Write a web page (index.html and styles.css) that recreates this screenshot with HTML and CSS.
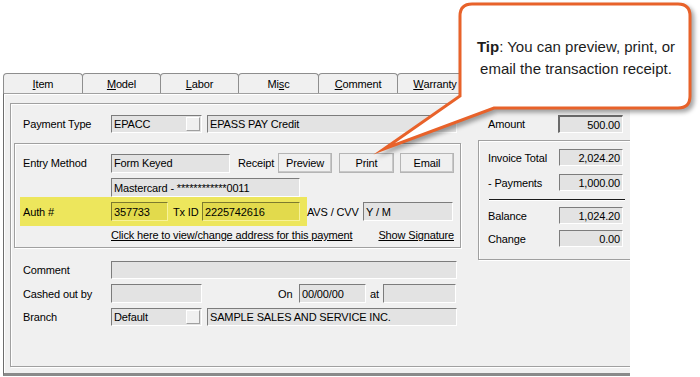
FILE: index.html
```html
<!DOCTYPE html>
<html>
<head>
<meta charset="utf-8">
<link rel="stylesheet" href="styles.css">
</head>
<body>
<div class="stage">
  <div class="window">
    <div class="tabs">
      <div class="tab t-item"><u>I</u>tem</div>
      <div class="tab t-model"><u>M</u>odel</div>
      <div class="tab t-labor"><u>L</u>abor</div>
      <div class="tab t-misc">Mi<u>s</u>c</div>
      <div class="tab t-comment"><u>C</u>omment</div>
      <div class="tab t-warranty"><u>W</u>arranty</div>
    </div>
    <div class="panel">
      <div class="group outer">
        <div class="col-left">
          <div class="row row-pay">
            <span class="lbl lbl-out">Payment Type</span>
            <div class="field combo"><span>EPACC</span><i class="drop"></i></div>
            <div class="field wide">EPASS PAY Credit</div>
          </div>

          <div class="group entry">
            <div class="row row-entry">
              <span class="lbl lbl-in">Entry Method</span>
              <div class="field f-keyed">Form Keyed</div>
              <span class="receipt">Receipt</span>
              <div class="btn b-preview">Preview</div>
              <div class="btn b-print">Print</div>
              <div class="btn b-email">Email</div>
            </div>
            <div class="row row-card">
              <div class="field f-card">Mastercard - ************0011</div>
            </div>
            <div class="row row-auth">
              <div class="hl">
                <span class="lbl lbl-auth">Auth #</span>
                <div class="field yf f-auth">357733</div>
                <span class="txid">Tx ID</span>
                <div class="field yf f-tx">2225742616</div>
              </div>
              <span class="avs">AVS / CVV</span>
              <div class="field f-avs">Y / M</div>
            </div>
            <div class="row row-link">
              <span class="link">Click here to view/change address for this payment</span>
              <span class="link sig">Show Signature</span>
            </div>
          </div>

          <div class="row row-comment">
            <span class="lbl lbl-out">Comment</span>
            <div class="field f-comment"></div>
          </div>
          <div class="row row-cashed">
            <span class="lbl lbl-out">Cashed out by</span>
            <div class="field f-cashed"></div>
            <span class="on">On</span>
            <div class="field f-date">00/00/00</div>
            <span class="at">at</span>
            <div class="field f-time"></div>
          </div>
          <div class="row row-branch">
            <span class="lbl lbl-out">Branch</span>
            <div class="field combo"><span>Default</span><i class="drop"></i></div>
            <div class="field wide">SAMPLE SALES AND SERVICE INC.</div>
          </div>
        </div>

        <div class="col-right">
          <div class="row row-amount">
            <span class="lbl lbl-amt">Amount</span>
            <div class="field num deep">500.00</div>
          </div>
          <div class="group totals">
            <div class="row trow">
              <span class="lbl lbl-tot">Invoice Total</span>
              <div class="field num">2,024.20</div>
            </div>
            <div class="row trow t2">
              <span class="lbl lbl-tot">- Payments</span>
              <div class="field num">1,000.00</div>
            </div>
            <div class="rule"></div>
            <div class="row trow t3">
              <span class="lbl lbl-tot">Balance</span>
              <div class="field num">1,024.20</div>
            </div>
            <div class="row trow t4">
              <span class="lbl lbl-tot">Change</span>
              <div class="field num">0.00</div>
            </div>
          </div>
        </div>
      </div>
    </div>
  </div>

  <svg class="callout" width="700" height="377" viewBox="0 0 700 377">
    <path d="M472 4 H678 Q690 4 690 16 V96 Q690 108 678 108 H494 L384 149 L460 96 V16 Q460 4 472 4 Z" fill="#ffffff" stroke="#e8622a" stroke-width="3" stroke-linejoin="miter" stroke-miterlimit="12"/>
  </svg>
  <div class="callout-text"><b>Tip</b>: You can preview, print, or<br>email the transaction receipt.</div>
</div>
</body>
</html>
```

FILE: styles.css
```css
* { box-sizing: border-box; }

body {
  margin: 0;
  background: #ffffff;
  font: 11px "Liberation Sans", Arial, sans-serif;
  letter-spacing: -0.15px;
  color: #000;
}

.stage {
  position: relative;
  width: 700px;
  height: 377px;
  overflow: hidden;
  padding: 73px 0 0 3px;
}

.window {
  width: 627px;
}

/* tabs */
.tabs {
  display: flex;
  height: 20px;
}
.tab {
  height: 20px;
  border: 1px solid #8e8e8e;
  border-bottom: none;
  border-radius: 4px 4px 0 0;
  background: #f0f0f0;
  display: flex;
  align-items: center;
  justify-content: center;
  margin-right: -1px;
  padding-top: 1px;
}
.t-item { width: 80px; }
.t-model { width: 79px; }
.t-labor { width: 79px; }
.t-misc { width: 81px; }
.t-comment { width: 80px; }
.t-warranty { width: 76px; }

/* panel */
.panel {
  height: 283px;
  background: #f0f0f0;
  border-top: 1px solid #a0a0a0;
  border-left: 1px solid #6d6d6d;
  border-bottom: 3px solid #8a8a8a;
  box-shadow: inset 1px 1px 0 #ffffff;
  overflow: hidden;
  padding: 9px 0 0 6px;
}

.group {
  border: 1px solid #a0a0a0;
  box-shadow: inset 1px 1px 0 #ffffff, 1px 1px 0 #ffffff;
}

.outer {
  display: flex;
  width: 700px;
  height: 264px;
}

.col-left {
  width: 457px;
  flex: none;
  display: flex;
  flex-direction: column;
}
.col-right {
  flex: none;
  width: 230px;
  display: flex;
  flex-direction: column;
}

.row {
  display: flex;
  align-items: center;
  flex: none;
}

.lbl { flex: none; white-space: nowrap; }
.lbl-out { width: 100px; padding-left: 12px; }
.lbl-in { width: 96px; padding-left: 8px; }

/* fields */
.field {
  flex: none;
  height: 18px;
  background: #e3e3e3;
  border: 1px solid;
  border-color: #7c7c7c #ffffff #ffffff #7c7c7c;
  padding: 0 2px;
  display: flex;
  align-items: center;
  white-space: nowrap;
  overflow: hidden;
}
.field.num { justify-content: flex-end; padding-right: 2px; }
.field.deep { border-width: 2px 1px 1px 2px; border-color: #6a6a6a #ffffff #ffffff #6a6a6a; }

.combo {
  width: 91px;
  justify-content: space-between;
  padding-right: 1px;
}
.drop {
  width: 14px;
  height: 14px;
  background: #f0f0f0;
  border: 1px solid;
  border-color: #ffffff #a0a0a0 #a0a0a0 #ffffff;
}
.wide { width: 250px; margin-left: 5px; }

.row-pay { margin-top: 11px; height: 18px; }

/* entry group */
.entry {
  margin: 10px 0 0 3px;
  width: 447px;
  height: 105px;
  padding-top: 9px;
  flex: none;
}
.row-entry { height: 20px; }
.f-keyed { width: 119px; height: 19px; }
.receipt { width: 40px; margin-left: 8px; }
.btn {
  flex: none;
  height: 20px;
  background: #f0f0f0;
  border: 1px solid;
  border-color: #ffffff #8a8a8a #8a8a8a #ffffff;
  box-shadow: inset -1px -1px 0 #c8c8c8;
  outline: 1px solid #b5b5b5;
  outline-offset: -1px;
  display: flex;
  align-items: center;
  justify-content: center;
}
.b-preview { width: 54px; }
.b-print { width: 55px; margin-left: 7px; }
.b-email { width: 54px; margin-left: 6px; }

.row-card { margin-top: 5px; padding-left: 96px; }
.f-card { width: 189px; height: 19px; }

.row-auth { height: 29px; }
.hl {
  display: flex;
  align-items: center;
  background: #ede65c;
  width: 287px;
  height: 29px;
  margin-left: 5px;
  padding-left: 3px;
}
.lbl-auth { width: 88px; }
.yf {
  height: 19px;
  background: #e2da4c;
  border-color: #7d7a2e #f7f29a #f7f29a #7d7a2e;
}
.f-auth { width: 57px; }
.txid { width: 29px; margin-left: 5px; }
.f-tx { width: 98px; }
.avs { width: 56px; }
.f-avs { width: 90px; height: 19px; }

.row-link { margin-top: 1px; height: 16px; padding-left: 96px; padding-right: 6px; }
.link { text-decoration: underline; white-space: nowrap; }
.sig { margin-left: auto; }

/* bottom rows */
.row-comment { margin-top: 13px; height: 18px; }
.f-comment { width: 346px; height: 18px; }
.row-cashed { margin-top: 5px; height: 19px; }
.f-cashed { width: 91px; height: 19px; }
.on { width: 21px; margin-left: 76px; }
.f-date { width: 67px; height: 19px; }
.at { width: 13px; margin-left: 4px; }
.f-time { width: 73px; height: 19px; }
.row-branch { margin-top: 5px; height: 18px; }

/* right column */
.row-amount { margin-top: 11px; height: 18px; }
.lbl-amt { width: 90px; padding-left: 20px; }
.row-amount .field { width: 65px; }

.totals {
  margin: 7px 0 0 10px;
  width: 220px;
  height: 120px;
  padding: 8px 0 0 9px;
  flex: none;
}
.trow { height: 17px; }
.trow .field { width: 64px; height: 17px; }
.lbl-tot { width: 71px; }
.t2 { margin-top: 8px; }
.rule {
  margin: 8px 0 0 1px;
  width: 136px;
  height: 1px;
  background: #1a1a1a;
  box-shadow: 0 1px 0 #ffffff;
}
.t3 { margin-top: 7px; }
.t4 { margin-top: 6px; }

/* callout overlay */
.callout {
  position: absolute;
  left: 0;
  top: 0;
  filter: drop-shadow(3px 3px 2px rgba(0, 0, 0, 0.35));
}
.callout-text {
  position: absolute;
  left: 460px;
  top: 36px;
  width: 232px;
  text-align: center;
  font: 15px/22px "Liberation Sans", Arial, sans-serif;
  letter-spacing: 0;
  color: #1c1c1c;
}
```
